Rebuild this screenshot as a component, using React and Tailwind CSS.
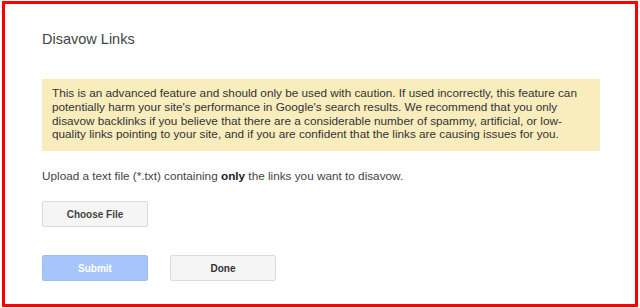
import React from "react";

const btn =
  "h-[26px] w-[106px] rounded-[2px] border text-[10px] font-bold flex items-center justify-center";

const App = () => {
  return (
    <div className="w-[640px] h-[308px] bg-white pt-[1px] pl-[2px] font-['Liberation_Sans',Arial,sans-serif]">
      <div className="w-[636px] h-[306px] border-[3px] border-[#ff0000] pl-[37px] pt-[27px]">
        {/* Header */}
        <h1 className="text-[14.5px] leading-[17px] text-[#444444]">Disavow Links</h1>

        {/* Warning */}
        <div className="mt-[31px] w-[558px] bg-[#f9edbe] pl-[10px] pr-[10px] pt-[7px] pb-[10px] text-[11.75px] leading-[13.8px] text-[#333333]">
          This is an advanced feature and should only be used with caution. If used incorrectly, this
          feature can potentially harm your site's performance in Google's search results. We
          recommend that you only disavow backlinks if you believe that there are a considerable
          number of spammy, artificial, or low-quality links pointing to your site, and if you are
          confident that the links are causing issues for you.
        </div>

        <p className="mt-[17px] text-[11.75px] leading-[15px] text-[#444444]">
          Upload a text file (*.txt) containing <span className="font-bold text-[#222222]">only</span> the links you want to disavow.
        </p>

        <button className={`${btn} mt-[18px] bg-[#f5f5f5] border-[#dcdcdc] text-[#444444]`}>
          Choose File
        </button>

        <div className="mt-[28px] flex gap-[22px]">
          <button className={`${btn} bg-[#a6c5fa] border-[#9dbef7] text-white`}>Submit</button>
          <button className={`${btn} bg-[#f5f5f5] border-[#dcdcdc] text-[#333333]`}>Done</button>
        </div>
      </div>
    </div>
  );
};

export default App;
